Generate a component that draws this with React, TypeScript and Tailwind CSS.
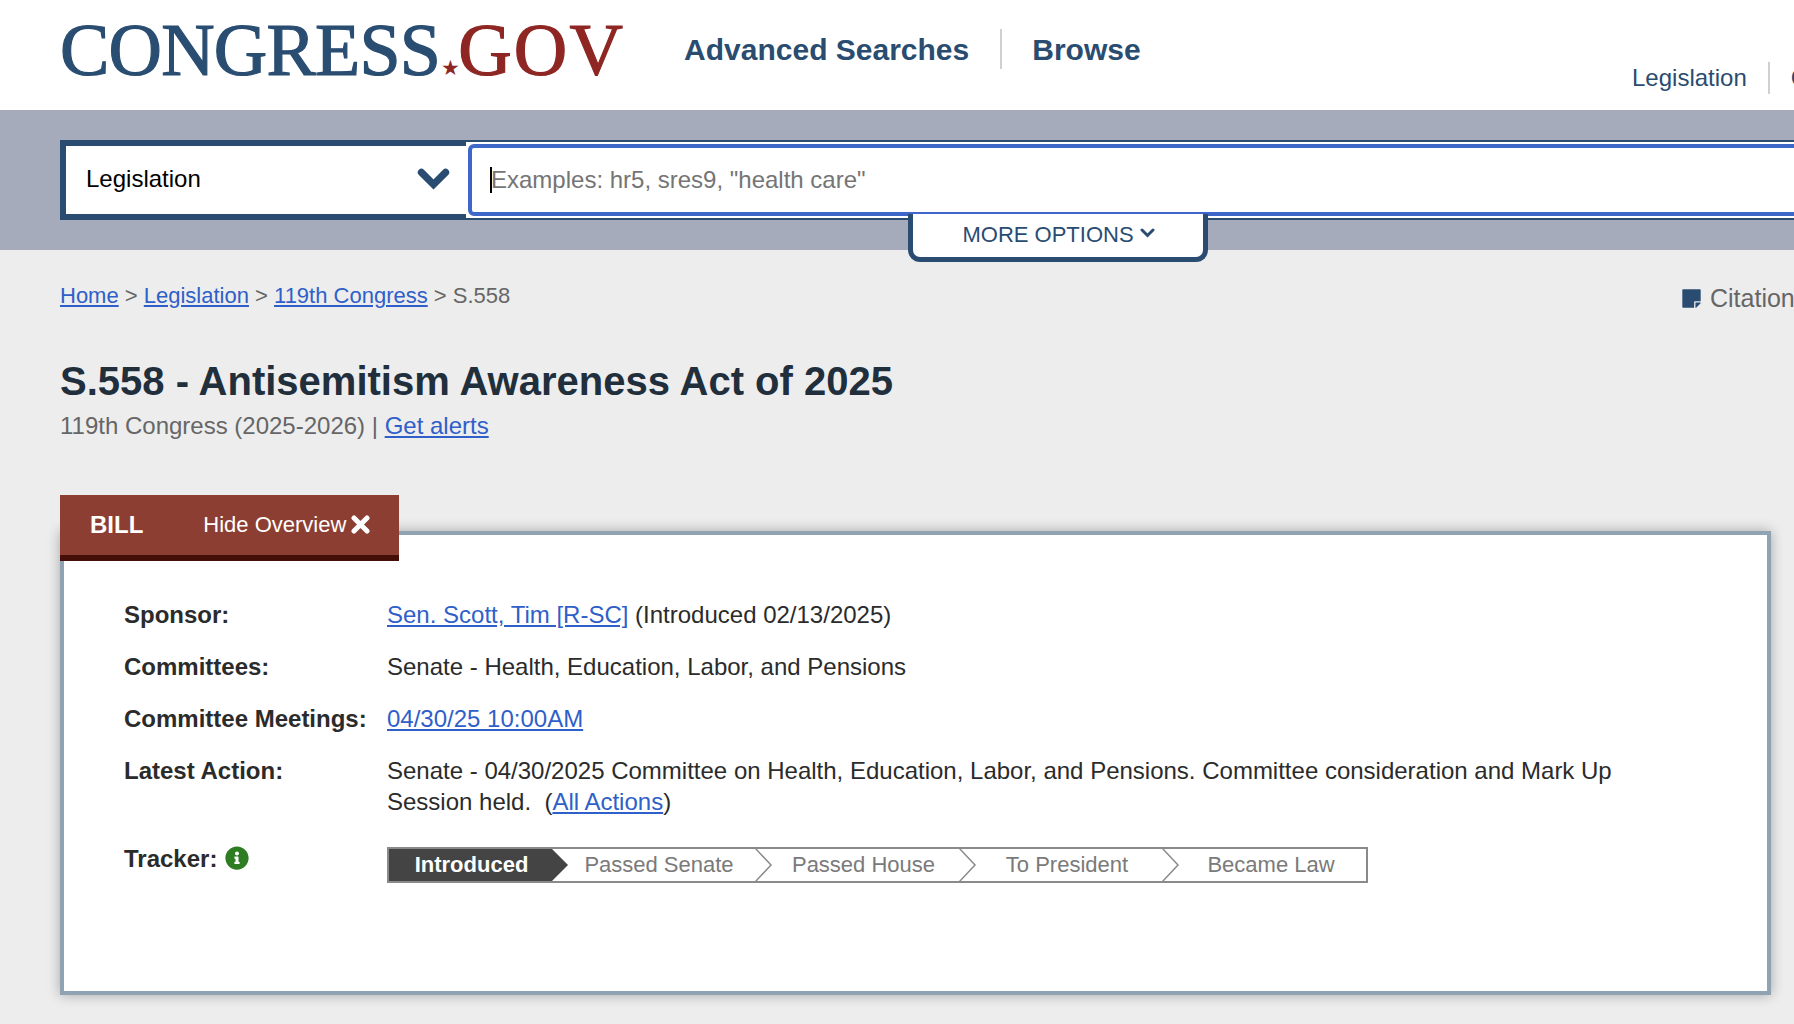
import React from "react";
import { FaInfoCircle, FaStickyNote } from "react-icons/fa";

const navy = "#294c70";

function Chevron({ x }: { x: number }) {
  return (
    <svg className="absolute top-0 h-[32px] w-[18px]" style={{ left: x }} viewBox="0 0 18 32" fill="none">
      <path d="M0 -1 L16 16 L0 33" stroke="#8a8a8a" strokeWidth="1.5" />
    </svg>
  );
}

function Seg({ w, children }: { w: string; children: React.ReactNode }) {
  return <div className={`${w} shrink-0 flex items-center justify-center text-[22px] text-[#7a7a7a]`}>{children}</div>;
}

function Row({ label, children }: { label: React.ReactNode; children: React.ReactNode }) {
  return (
    <>
      <div className="font-bold text-[#2b2b2b]">{label}</div>
      <div className="text-[#2b2b2b]">{children}</div>
    </>
  );
}

function A({ children }: { children: React.ReactNode }) {
  return <a className="text-[#2f5fc9] underline" href="#">{children}</a>;
}

function Vee({ w, h, sw }: { w: number; h: number; sw: number }) {
  return (
    <svg width={w} height={h} viewBox="0 0 30 20" fill="none" className="shrink-0">
      <path d="M4 4 L15 15 L26 4" stroke={navy} strokeWidth={sw} strokeLinecap="round" strokeLinejoin="miter" />
    </svg>
  );
}

export default function App() {
  return (
    <div className="relative w-[1794px] h-[1024px] overflow-hidden bg-[#ededed] font-['Liberation_Sans',Arial,sans-serif]">
      <header className="relative h-[110px] bg-white flex items-start">
        <div className="ml-[60px] mt-[13px] flex items-baseline font-['Liberation_Serif',serif] text-[74px] leading-[74px] whitespace-nowrap">
          <span className="text-[#2a4d72] tracking-[-0.8px] [-webkit-text-stroke:1.2px_#2a4d72]">CONGRESS</span>
          <span className="text-[#8e2723] text-[21px] leading-none mx-[1px] w-[16px] text-center">★</span>
          <span className="text-[#8e2723] tracking-[2.2px] [-webkit-text-stroke:1.2px_#8e2723]">GOV</span>
        </div>
        <nav className="ml-[59px] mt-[29px] flex items-center h-[40px] text-[30px] font-bold" style={{ color: navy }}>
          <span>Advanced Searches</span>
          <span className="ml-[31px] mr-[30px] h-[40px] w-[2px] bg-[#d0d0d0]" />
          <span>Browse</span>
        </nav>
        <div className="absolute left-[1632px] top-[62px] flex items-center h-[32px] text-[24px] whitespace-nowrap" style={{ color: navy }}>
          <span>Legislation</span>
          <span className="ml-[21px] mr-[21px] h-[32px] w-[2px] bg-[#d0d0d0]" />
          <span>Congress</span>
        </div>
      </header>

      <div className="relative h-[140px] bg-[#a5abbb] pt-[30px] pl-[60px]">
        <div className="flex h-[80px] w-[1800px]">
          <div className="w-[406px] shrink-0 border-[6px] border-r-0 border-[#294c70] bg-white flex items-center justify-between pl-[20px] pr-[16px] pb-[2px] text-[24px] text-black">
            <span>Legislation</span>
            <Vee w={33} h={22} sw={6.5} />
          </div>
          <div className="flex-1 border-y-2 border-[#294c70] bg-white">
            <div className="relative h-full bg-white">
              <div className="absolute inset-[2px] right-[-20px] rounded-[6px] border-4 border-[#3f67c9]" />
              <input
                readOnly
                placeholder={'Examples: hr5, sres9, "health care"'}
                className="relative w-[1200px] h-full pl-[25px] bg-transparent text-[24px] outline-none placeholder:text-[#757575]"
              />
              <span className="absolute left-[24px] top-[25px] h-[26px] w-[2px] bg-black" />
            </div>
          </div>
        </div>
        <div className="absolute left-[908px] top-[104px] w-[300px] h-[48px] pb-[3px] pl-[1px] bg-white border-[5px] border-t-0 border-[#294c70] rounded-b-[12px] flex items-center justify-center gap-[6px] text-[22px]" style={{ color: navy }}>
          <span>MORE OPTIONS</span>
          <span className="mt-[-3px] flex"><Vee w={15} h={10} sw={6} /></span>
        </div>
      </div>

      <main className="relative px-[60px]">
        <div className="absolute left-[1681px] top-[30px] flex items-center gap-[8px] text-[25px] text-[#666666] whitespace-nowrap">
          <FaStickyNote className="w-[21px] h-[21px]" style={{ color: navy }} />
          <span>Citation</span>
        </div>
        <div className="pt-[33px] h-[64px] text-[22px] leading-[26px] text-[#666666] whitespace-nowrap">
          <A>Home</A> &gt; <A>Legislation</A> &gt; <A>119th Congress</A> &gt; S.558
        </div>
        <h1 className="mt-[42px] text-[40px] leading-[50px] font-bold text-[#212f3d] whitespace-nowrap">S.558 - Antisemitism Awareness Act of 2025</h1>
        <div className="mt-[5px] text-[24px] leading-[30px] text-[#666666]">
          119th Congress (2025-2026) | <A>Get alerts</A>
        </div>

        <section className="relative mt-[90px] w-[1711px] h-[464px] bg-white border-4 border-[#8fa3b3] shadow-[0_0_12px_rgba(0,0,0,0.3)] pt-[64px] pl-[60px] text-[24px] leading-[32px]">
          <div className="absolute left-[-4px] top-[-40px] w-[339px] h-[66px] bg-[#8c3e32] border-b-[6px] border-[#430f08] text-white flex items-center pl-[30px]">
            <span className="font-bold text-[24px]">BILL</span>
            <span className="ml-[60px] text-[22px]">Hide Overview</span>
            <svg width="19" height="19" viewBox="0 0 19 19" className="ml-[5px] mt-[-2px]" fill="none">
              <path d="M3 3 L16 16 M16 3 L3 16" stroke="white" strokeWidth="5" strokeLinecap="round" />
            </svg>
          </div>
          <div className="grid grid-cols-[263px_1fr] gap-y-[20px]">
            <Row label="Sponsor:"><A>Sen. Scott, Tim [R-SC]</A> (Introduced 02/13/2025)</Row>
            <Row label="Committees:">Senate - Health, Education, Labor, and Pensions</Row>
            <Row label="Committee Meetings:"><A>04/30/25 10:00AM</A></Row>
            <Row label="Latest Action:">
              <div className="leading-[31px]">
                Senate - 04/30/2025 Committee on Health, Education, Labor, and Pensions. Committee consideration and Mark Up<br />
                Session held.&nbsp; (<A>All Actions</A>)
              </div>
            </Row>
            <div className="flex items-center self-start mt-[6px] h-[32px] gap-[8px] font-bold text-[#2b2b2b]">
              Tracker: <FaInfoCircle className="w-[24px] h-[24px] text-[#2e7d22] mt-[-2px]" />
            </div>
            <div className="relative mt-[10px] flex w-[981px] h-[36px] border-2 border-[#8a8a8a] leading-none">
              <div className="relative w-[163px] shrink-0 pl-[2px] bg-[#444444] flex items-center justify-center text-[22px] font-bold text-white">
                Introduced
                <svg className="absolute left-full top-0 h-[32px] w-[17px]" viewBox="0 0 17 32">
                  <path d="M0 0 L16 16 L0 32 Z" fill="#444444" />
                </svg>
              </div>
              <Seg w="w-[205px] pl-[9px]">Passed Senate</Seg>
              <Seg w="w-[204px] pl-[9px]">Passed House</Seg>
              <Seg w="w-[203px] pl-[9px]">To President</Seg>
              <Seg w="w-[202px] pl-[12px]">Became Law</Seg>
              <Chevron x={366} />
              <Chevron x={570} />
              <Chevron x={773} />
            </div>
          </div>
        </section>
      </main>
    </div>
  );
}
